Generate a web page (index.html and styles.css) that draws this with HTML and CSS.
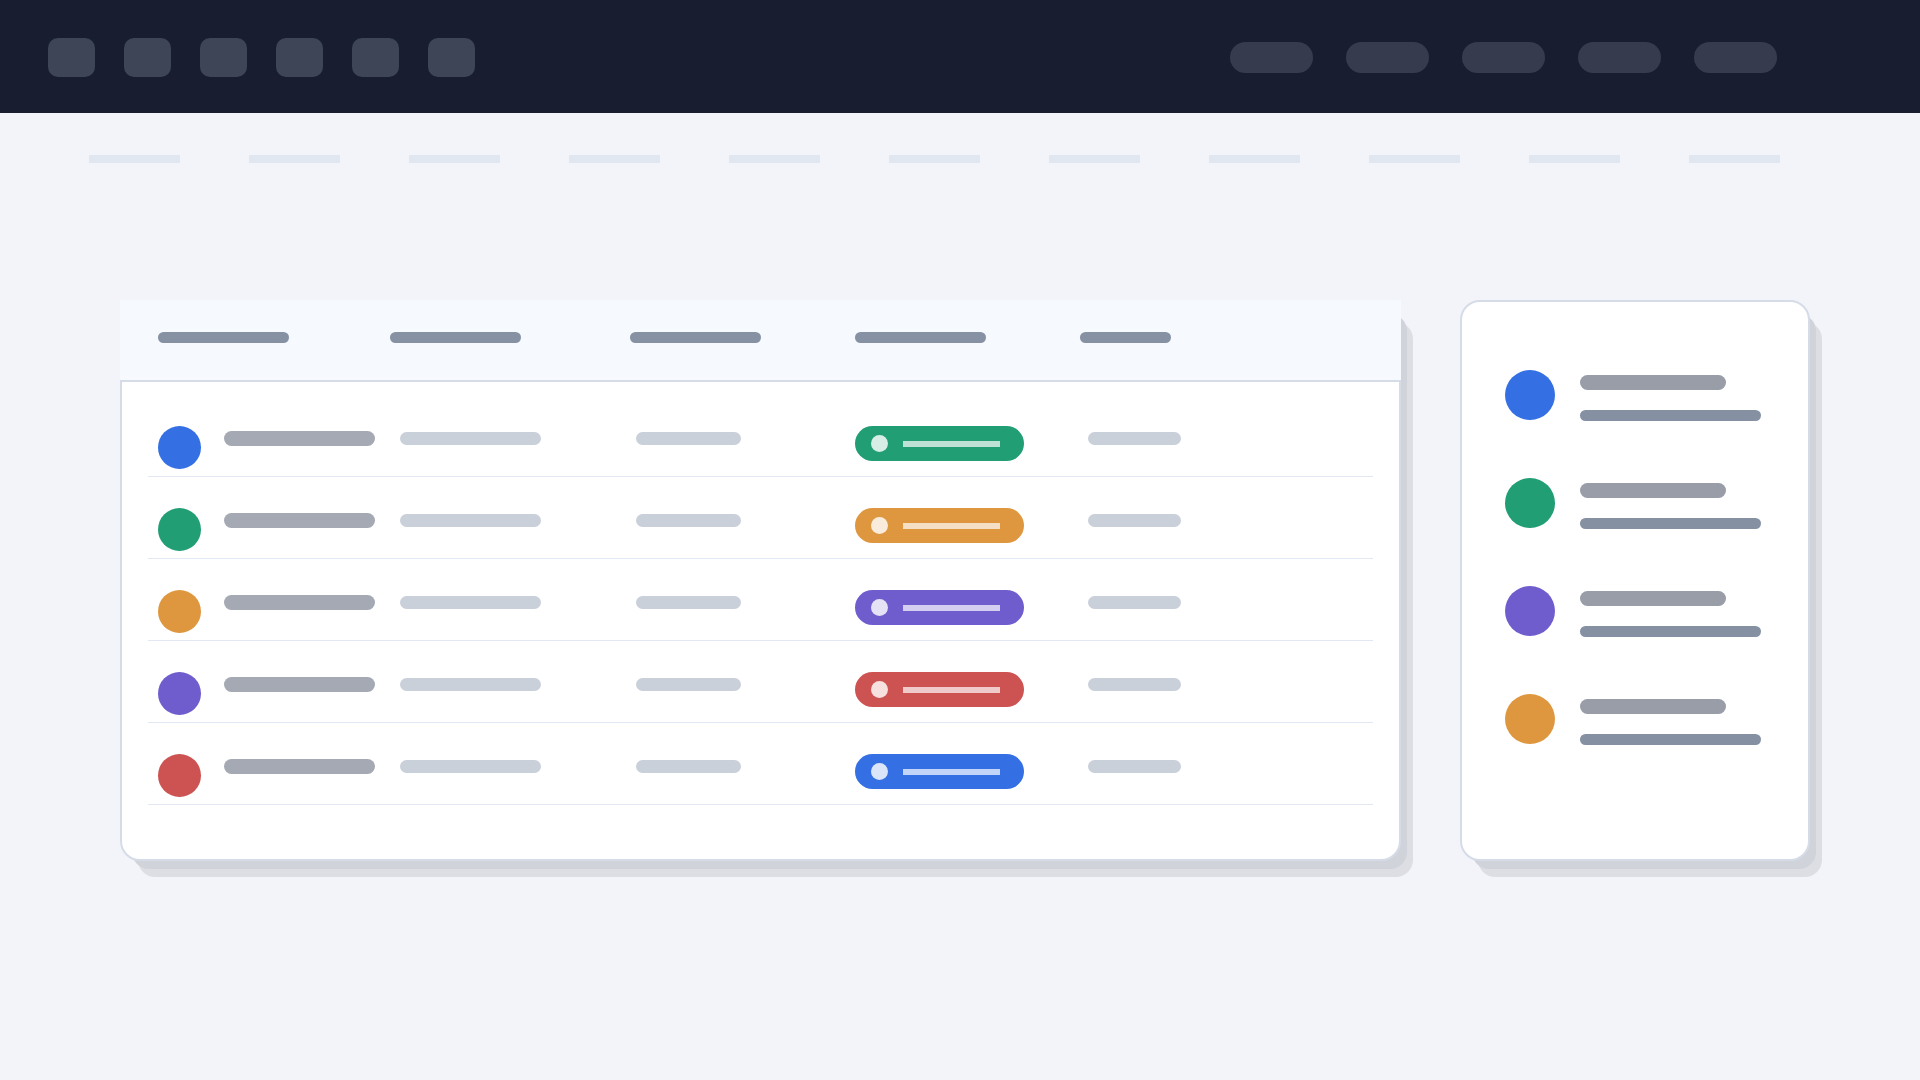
FILE: index.html
```html
<!DOCTYPE html>
<html lang="en">
<head>
    <meta charset="UTF-8">
    <meta name="viewport" content="width=device-width, initial-scale=1.0">
    <title>Dashboard</title>
    <link rel="stylesheet" href="styles.css">
</head>
<body>
    <header class="topbar">
        <div class="tools">
            <div class="tool"></div>
            <div class="tool"></div>
            <div class="tool"></div>
            <div class="tool"></div>
            <div class="tool"></div>
            <div class="tool"></div>
        </div>
        <nav class="links">
            <div class="link"></div>
            <div class="link"></div>
            <div class="link"></div>
            <div class="link"></div>
            <div class="link"></div>
        </nav>
    </header>

    <div class="ruler">
        <div class="tick"></div>
        <div class="tick"></div>
        <div class="tick"></div>
        <div class="tick"></div>
        <div class="tick"></div>
        <div class="tick"></div>
        <div class="tick"></div>
        <div class="tick"></div>
        <div class="tick"></div>
        <div class="tick"></div>
        <div class="tick"></div>
    </div>

    <main class="content">
        <section class="table-card">
            <div class="table-head">
                <div class="head-bar"></div>
                <div class="head-bar"></div>
                <div class="head-bar"></div>
                <div class="head-bar"></div>
                <div class="head-bar short"></div>
            </div>
            <div class="table-body">
                <div class="row">
                    <div class="avatar blue"></div>
                    <div class="name"></div>
                    <div class="cell wide"></div>
                    <div class="cell mid"></div>
                    <div class="badge green"><span class="badge-dot"></span><span class="badge-line"></span></div>
                    <div class="cell small"></div>
                </div>
                <div class="row">
                    <div class="avatar green"></div>
                    <div class="name"></div>
                    <div class="cell wide"></div>
                    <div class="cell mid"></div>
                    <div class="badge orange"><span class="badge-dot"></span><span class="badge-line"></span></div>
                    <div class="cell small"></div>
                </div>
                <div class="row">
                    <div class="avatar orange"></div>
                    <div class="name"></div>
                    <div class="cell wide"></div>
                    <div class="cell mid"></div>
                    <div class="badge purple"><span class="badge-dot"></span><span class="badge-line"></span></div>
                    <div class="cell small"></div>
                </div>
                <div class="row">
                    <div class="avatar purple"></div>
                    <div class="name"></div>
                    <div class="cell wide"></div>
                    <div class="cell mid"></div>
                    <div class="badge red"><span class="badge-dot"></span><span class="badge-line"></span></div>
                    <div class="cell small"></div>
                </div>
                <div class="row">
                    <div class="avatar red"></div>
                    <div class="name"></div>
                    <div class="cell wide"></div>
                    <div class="cell mid"></div>
                    <div class="badge blue"><span class="badge-dot"></span><span class="badge-line"></span></div>
                    <div class="cell small"></div>
                </div>
            </div>
        </section>

        <aside class="side-card">
            <div class="side-item">
                <div class="side-avatar blue"></div>
                <div class="side-lines">
                    <div class="side-title"></div>
                    <div class="side-sub"></div>
                </div>
            </div>
            <div class="side-item">
                <div class="side-avatar green"></div>
                <div class="side-lines">
                    <div class="side-title"></div>
                    <div class="side-sub"></div>
                </div>
            </div>
            <div class="side-item">
                <div class="side-avatar purple"></div>
                <div class="side-lines">
                    <div class="side-title"></div>
                    <div class="side-sub"></div>
                </div>
            </div>
            <div class="side-item">
                <div class="side-avatar orange"></div>
                <div class="side-lines">
                    <div class="side-title"></div>
                    <div class="side-sub"></div>
                </div>
            </div>
        </aside>
    </main>
</body>
</html>
```

FILE: styles.css
```css
*{
    margin: 0;
    padding: 0;
    box-sizing: border-box;
}
body{
    background-color: #f2f4f9;
    font-family: "Liberation Sans", Arial, sans-serif;
    min-height: 1080px;
}

/* top bar */
.topbar{
    height: 113px;
    background-color: #181e30;
    display: flex;
    justify-content: space-between;
    align-items: center;
    padding: 2px 143px 0 48px;
}
.tools{
    display: flex;
    gap: 29px;
}
.tool{
    width: 47px;
    height: 39px;
    border-radius: 10px;
    background-color: #3d4556;
}
.links{
    display: flex;
    gap: 33px;
}
.link{
    width: 83px;
    height: 31px;
    border-radius: 16px;
    background-color: #363c4d;
}

/* dashed ruler */
.ruler{
    display: flex;
    gap: 69px;
    padding: 42px 0 0 89px;
}
.tick{
    width: 91px;
    height: 8px;
    background-color: #e1e7f0;
}

.content{
    display: flex;
    align-items: flex-start;
    gap: 59px;
    padding: 137px 0 0 120px;
}

/* table card */
.table-card{
    width: 1281px;
    height: 561px;
    background-color: #fff;
    border: 2px solid #d5dce8;
    border-radius: 20px;
    box-shadow: 9px 11px 0 -3px #d0d3da, 15px 19px 0 -3px #dcdee3;
}
.table-head{
    margin: -2px -2px 0;
    height: 82px;
    background-color: #f6f9fe;
    border-bottom: 2px solid #d5dce8;
    display: grid;
    grid-template-columns: 232px 240px 225px 225px 1fr;
    align-items: start;
    padding: 32px 0 0 38px;
}
.head-bar{
    width: 131px;
    height: 11px;
    border-radius: 6px;
    background-color: #8691a4;
}
.head-bar.short{
    width: 91px;
}
.table-body{
    padding: 13px 26px 0;
}
.row{
    height: 82px;
    display: grid;
    grid-template-columns: 66px 176px 236px 219px 233px 1fr;
    align-items: start;
    padding-left: 10px;
    border-bottom: 1px solid #e2e8f3;
}
.avatar{
    width: 43px;
    height: 43px;
    border-radius: 50%;
    margin-top: 31px;
}
.name{
    width: 151px;
    height: 15px;
    margin-top: 36px;
    border-radius: 8px;
    background-color: #a4a9b3;
}
.cell{
    height: 13px;
    margin-top: 37px;
    border-radius: 7px;
    background-color: #cad0da;
}
.cell.wide{ width: 141px; }
.cell.mid{ width: 105px; }
.cell.small{ width: 93px; }

.badge{
    width: 169px;
    height: 35px;
    margin-top: 31px;
    border-radius: 18px;
    display: flex;
    align-items: flex-start;
    gap: 15px;
    padding: 9px 0 0 16px;
}
.badge-dot{
    width: 17px;
    height: 17px;
    border-radius: 50%;
    background-color: rgba(255, 255, 255, 0.82);
}
.badge-line{
    width: 97px;
    height: 6px;
    margin-top: 6px;
    background-color: rgba(255, 255, 255, 0.7);
}

/* side card */
.side-card{
    width: 350px;
    height: 561px;
    background-color: #fff;
    border: 2px solid #d5dce8;
    border-radius: 20px;
    box-shadow: 9px 11px 0 -3px #d0d3da, 15px 19px 0 -3px #dcdee3;
    display: flex;
    flex-direction: column;
    gap: 57px;
    padding: 68px 0 0 43px;
}
.side-item{
    display: flex;
    gap: 25px;
}
.side-avatar{
    width: 50px;
    height: 50px;
    border-radius: 50%;
}
.side-lines{
    display: flex;
    flex-direction: column;
    gap: 20px;
    padding-top: 5px;
}
.side-title{
    width: 146px;
    height: 15px;
    border-radius: 8px;
    background-color: #999da8;
}
.side-sub{
    width: 181px;
    height: 11px;
    border-radius: 6px;
    background-color: #8591a3;
}

/* colours */
.blue{ background-color: #3470e3; }
.green{ background-color: #229e74; }
.orange{ background-color: #df973f; }
.purple{ background-color: #6f5dcd; }
.red{ background-color: #cc5352; }
```
